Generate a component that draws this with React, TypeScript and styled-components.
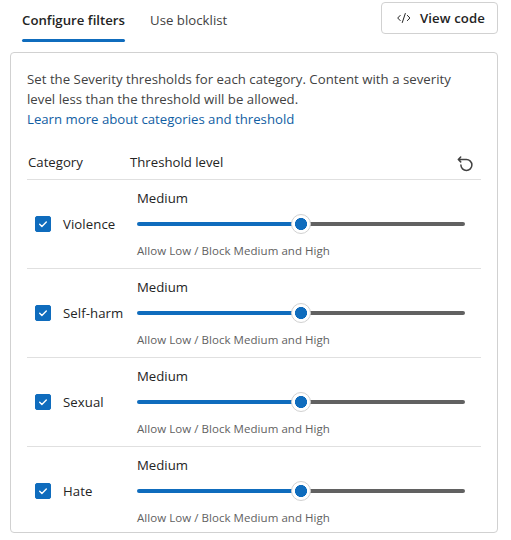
import React, { useState } from "react";
import styled, { createGlobalStyle } from "styled-components";

const GlobalStyle = createGlobalStyle`
  *, *::before, *::after { box-sizing: border-box; }
  body {
    margin: 0;
    background: #fff;
    color: #242424;
    font-family: "Segoe UI", "Open Sans", "Noto Sans", sans-serif;
    font-size: 13.2px;
    line-height: 20px;
    overflow: hidden;
  }
`;

const Page = styled.main`
  width: 511px;
  height: 540px;
  padding: 2px 13px 0 10px;
  overflow: hidden;
`;

const TopBar = styled.header`
  display: flex;
  align-items: flex-start;
  justify-content: space-between;
  height: 50px;
  padding-left: 12px;
`;

const TabList = styled.div`
  display: flex;
  gap: 25px;
`;

const Tab = styled.button<{ $active?: boolean; $width: number }>`
  display: flex;
  flex-direction: column;
  justify-content: space-between;
  width: ${(p) => p.$width}px;
  height: 40px;
  padding: 8px 0 0;
  border: 0;
  background: none;
  color: ${(p) => (p.$active ? "#242424" : "#424242")};
  font: inherit;
  font-weight: ${(p) => (p.$active ? 600 : 400)};
  letter-spacing: ${(p) => (p.$active ? 0.02 : 0.03)}px;
  text-align: left;
  white-space: nowrap;

  &::after {
    content: "";
    width: 100%;
    height: 3px;
    border-radius: 2px;
    background: ${(p) => (p.$active ? "#0f6cbd" : "transparent")};
  }
`;

const CodeButton = styled.button`
  display: flex;
  align-items: center;
  gap: 8px;
  width: 117px;
  height: 32px;
  padding: 0 0 0 14px;
  border: 1px solid #d1d1d1;
  border-radius: 4px;
  background: #fff;
  color: #242424;
  font: inherit;
  font-weight: 600;
  letter-spacing: 0.1px;
  white-space: nowrap;
`;

const Card = styled.section`
  height: 481px;
  padding: 16px 16px 0;
  border: 1px solid #d1d1d1;
  border-radius: 4px;
`;

const Intro = styled.p`
  margin: 0;
  color: #424242;
  white-space: nowrap;
`;

const IntroLine = styled.span`
  display: block;
  letter-spacing: 0.03px;
`;

const Link = styled.a`
  display: block;
  color: #115ea3;
  text-decoration: none;
`;

const TableHeader = styled.div`
  display: grid;
  grid-template-columns: 102px 1fr 20px;
  align-items: center;
  height: 34px;
  margin-top: 17px;
  padding: 0 6px 0 1px;
  border-bottom: 1px solid #e0e0e0;
`;

const ColumnTitle = styled.span`
  padding-bottom: 2px;
`;

const ResetButton = styled.button`
  display: flex;
  width: 20px;
  height: 20px;
  padding: 0;
  border: 0;
  background: none;
  color: #424242;
`;

const Row = styled.div`
  display: grid;
  grid-template-columns: 36px 74px 328px;
  align-items: center;
  height: 89px;
  border-bottom: 1px solid #e0e0e0;

  &:last-child {
    border-bottom-color: transparent;
  }
`;

const Checkbox = styled.button<{ $checked: boolean }>`
  display: flex;
  width: 16px;
  height: 16px;
  margin-left: 8px;
  padding: 0;
  border: 1px solid #0f6cbd;
  border-radius: 2px;
  background: ${(p) => (p.$checked ? "#0f6cbd" : "#fff")};
  color: #fff;
`;

const Name = styled.span`
  letter-spacing: 0.08px;
  white-space: nowrap;
`;

const Threshold = styled.div`
  display: flex;
  flex-direction: column;
  height: 88px;
  padding-top: 8px;
`;

const Slider = styled.div`
  display: grid;
  align-items: center;
  height: 20px;
  margin-top: 6px;
`;

const Track = styled.div`
  grid-area: 1 / 1;
  height: 4px;
  border-radius: 2px;
  background: linear-gradient(to right, #0f6cbd 50%, #616161 50%);
`;

const Thumb = styled.div`
  grid-area: 1 / 1;
  justify-self: center;
  width: 20px;
  height: 20px;
  border: 1px solid #d1d1d1;
  border-radius: 50%;
  background: radial-gradient(circle, #0f6cbd 5.7px, #fff 6.3px);
`;

const Hint = styled.span`
  margin-top: 9px;
  color: #616161;
  font-size: 11.5px;
  letter-spacing: 0.05px;
  line-height: 16px;
  white-space: nowrap;
`;

const CodeIcon = () => (
  <svg width="16" height="16" viewBox="0 0 16 16" fill="none" stroke="currentColor" strokeLinecap="round" strokeLinejoin="round">
    <path d="M4.2 5.4 1.7 8l2.5 2.6M11.4 5.4 13.9 8l-2.5 2.6M9.3 3.5l-3 9" />
  </svg>
);

const ResetIcon = () => (
  <svg width="20" height="20" viewBox="0 0 20 20" fill="none" stroke="currentColor" strokeWidth="1.5" strokeLinecap="round" strokeLinejoin="round">
    <path d="M5.7 4 3.3 6.5l2.4 2.4M3.3 6.5h8.1a5.5 5.5 0 1 1-5.5 5.5" />
  </svg>
);

const CheckIcon = () => (
  <svg width="14" height="14" viewBox="0 0 14 14" fill="none" stroke="currentColor" strokeWidth="1.4" strokeLinecap="round" strokeLinejoin="round">
    <path d="m3.7 7.2 2.2 2.2 4.4-4.4" />
  </svg>
);

const categories = ["Violence", "Self-harm", "Sexual", "Hate"];

function FilterRow({ name }: { name: string }) {
  const [checked, setChecked] = useState(true);
  return (
    <Row>
      <Checkbox role="checkbox" aria-checked={checked} aria-label={name} $checked={checked} onClick={() => setChecked(!checked)}>
        {checked && <CheckIcon />}
      </Checkbox>
      <Name>{name}</Name>
      <Threshold>
        <span>Medium</span>
        <Slider role="slider" aria-label={`${name} threshold`} aria-valuetext="Medium" aria-valuenow={1} aria-valuemin={0} aria-valuemax={2}>
          <Track />
          <Thumb />
        </Slider>
        <Hint>Allow Low / Block Medium and High</Hint>
      </Threshold>
    </Row>
  );
}

export default function App() {
  return (
    <>
      <GlobalStyle />
      <Page>
        <TopBar>
          <TabList role="tablist">
            <Tab role="tab" $active $width={103}>Configure filters</Tab>
            <Tab role="tab" $width={78}>Use blocklist</Tab>
          </TabList>
          <CodeButton>
            <CodeIcon />
            View code
          </CodeButton>
        </TopBar>
        <Card>
          <Intro>
            <IntroLine>Set the Severity thresholds for each category. Content with a severity</IntroLine>
            <IntroLine>level less than the threshold will be allowed.</IntroLine>
            <Link href="#">Learn more about categories and threshold</Link>
          </Intro>
          <TableHeader>
            <ColumnTitle>Category</ColumnTitle>
            <ColumnTitle>Threshold level</ColumnTitle>
            <ResetButton aria-label="Reset thresholds">
              <ResetIcon />
            </ResetButton>
          </TableHeader>
          {categories.map((name) => (
            <FilterRow key={name} name={name} />
          ))}
        </Card>
      </Page>
    </>
  );
}
